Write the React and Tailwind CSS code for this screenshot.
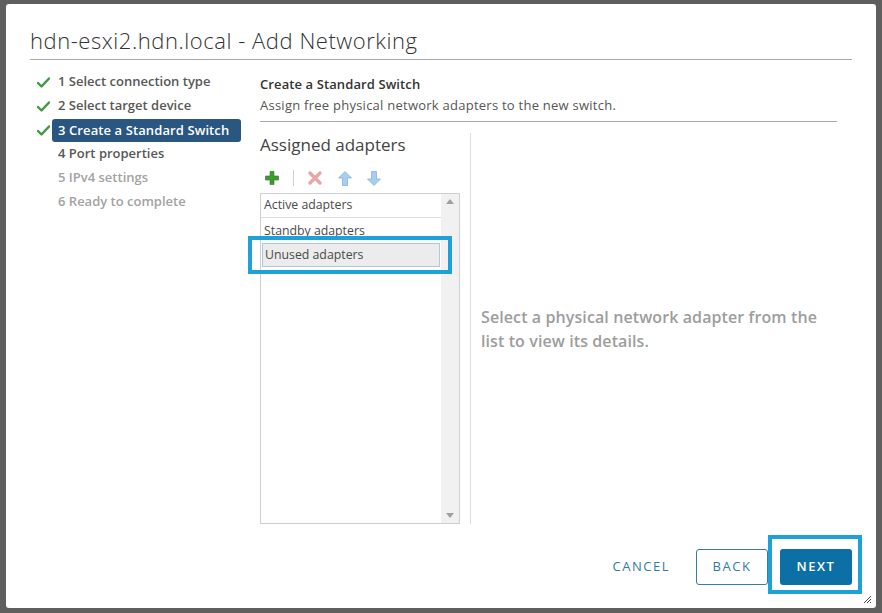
import React from 'react';

const steps = [
  { n: 1, label: 'Select connection type', done: true },
  { n: 2, label: 'Select target device', done: true },
  { n: 3, label: 'Create a Standard Switch', done: true, active: true },
  { n: 4, label: 'Port properties' },
  { n: 5, label: 'IPv4 settings', disabled: true },
  { n: 6, label: 'Ready to complete', disabled: true },
];

function Check() {
  return (
    <svg width="13" height="11" viewBox="0 0 13 11" className="shrink-0">
      <path d="M1 6 L4.5 9.5 L12 1.5" fill="none" stroke="#3c9a3c" strokeWidth="2.4" strokeLinecap="round" strokeLinejoin="round" />
    </svg>
  );
}

function PlusIcon() {
  return (
    <svg width="16" height="16" viewBox="0 0 16 16">
      <path d="M6 1.5h4v4.5h4.5v4H10v4.5H6V10H1.5V6H6z" fill="#3e9b2f" stroke="#2c7a22" strokeWidth="0.6" />
    </svg>
  );
}

function RemoveIcon() {
  return (
    <svg width="16" height="16" viewBox="0 0 16 16">
      <path d="M3 3 L13 13 M13 3 L3 13" stroke="#e7a7a7" strokeWidth="3.4" strokeLinecap="round" />
    </svg>
  );
}

function ArrowIcon({ down }) {
  return (
    <svg width="16" height="17" viewBox="0 0 16 17" style={down ? { transform: 'rotate(180deg)' } : undefined}>
      <path d="M8 1.5 L14.5 8 H10.5 V15.5 H5.5 V8 H1.5 Z" fill="#a9cdec" stroke="#86b4dc" strokeWidth="0.8" strokeLinejoin="round" />
    </svg>
  );
}

export default function App() {
  return (
    <div className="w-[882px] h-[613px] bg-[#5f5f5f] pt-[4px] pl-[6px] font-['Open_Sans',sans-serif]">
      <div className="relative w-[870px] h-[604px] bg-white rounded-[3px] flex flex-col">
        {/* header */}
        <div className="pl-[24px] pr-[24px] pt-[23px]">
          <h1 className="text-[22px] leading-[26px] text-[#333] font-light tracking-[0.55px]">
            hdn-esxi2.hdn.local - Add Networking
          </h1>
          <div className="mt-[6px] h-px bg-[#a8a8a8]" />
        </div>

        <div className="flex flex-1 min-h-0">
          {/* wizard steps */}
          <ul className="w-[254px] pl-[31px] pt-[10px] text-[13px] font-semibold">
            {steps.map((s) => (
              <li key={s.n} className="flex items-center h-[24px]">
                <span className="w-[15px] flex justify-start">{s.done && <Check />}</span>
                <span
                  className={
                    s.active
                      ? 'pl-[6px] pr-[12px] h-[23px] leading-[23px] rounded-[3px] bg-[#2a5682] text-white tracking-[0.1px]'
                      : s.disabled
                        ? 'pl-[6px] text-[#a3a3a3]'
                        : 'pl-[6px] text-[#575757]'
                  }
                >
                  {s.n} {s.label}
                </span>
              </li>
            ))}
          </ul>

          {/* step content */}
          <div className="flex-1 pr-[39px] pt-[16px] flex flex-col">
            <h2 className="text-[13px] leading-[16px] font-semibold text-[#333] tracking-[0.1px]">Create a Standard Switch</h2>
            <p className="mt-[5px] text-[13px] leading-[16px] text-[#565656] tracking-[0.25px]">
              Assign free physical network adapters to the new switch.
            </p>
            <div className="mt-[8px] h-px bg-[#a8a8a8]" />

            <div className="flex mt-[11px] h-[391px]">
              <div className="w-[211px] border-r border-[#dcdcdc] pr-[10px] flex flex-col">
                <h3 className="text-[17px] leading-[22px] text-[#444] font-normal mt-[1px]">Assigned adapters</h3>
                <div className="flex items-center h-[22px] mt-[11px] pl-[4px]">
                  <PlusIcon />
                  <span className="ml-[13px] mr-[13px] w-px h-[16px] bg-[#cfcfcf]" />
                  <RemoveIcon />
                  <span className="ml-[14px]"><ArrowIcon /></span>
                  <span className="ml-[13px]"><ArrowIcon down /></span>
                </div>
                <div className="mt-[4px] flex-1 border border-[#cfcfcf] flex">
                  <div className="flex-1 text-[12.3px] text-[#4a4a4a]">
                    <div className="h-[24px] leading-[22px] pl-[3px] border-b border-[#dcdcdc]">Active adapters</div>
                    <div className="h-[25px] leading-[25px] pl-[3px]">Standby adapters</div>
                    <div className="mx-[1px] h-[24px] leading-[22px] pl-[2px] bg-[#ececec] border border-[#a9cbe0]">
                      Unused adapters
                    </div>
                  </div>
                  <div className="w-[18px] bg-[#f1f1f1] flex flex-col justify-between items-center py-[5px]">
                    <span className="w-0 h-0 border-l-[4px] border-r-[4px] border-b-[5px] border-l-transparent border-r-transparent border-b-[#a0a0a0]" />
                    <span className="w-0 h-0 border-l-[4px] border-r-[4px] border-t-[5px] border-l-transparent border-r-transparent border-t-[#a0a0a0]" />
                  </div>
                </div>
              </div>
              <div className="flex-1 pl-[10px] pt-[172px]">
                <p className="text-[16px] leading-[24px] font-semibold text-[#9d9d9d] w-[350px] tracking-[0.1px]">
                  Select a physical network adapter from the list to view its details.
                </p>
              </div>
            </div>
          </div>
        </div>

        {/* footer buttons */}
        <div className="flex justify-end items-center gap-[12px] pr-[24px] pb-[23px] pt-[17px]">
          <button className="h-[36px] px-[14px] text-[13px] tracking-[1.5px] text-[#2f7aa6] font-normal">CANCEL</button>
          <button className="h-[36px] w-[72px] border border-[#3b7ba3] rounded-[3px] text-[13px] tracking-[1.5px] text-[#2f7aa6]">BACK</button>
          <button className="h-[36px] w-[72px] rounded-[3px] bg-[#0c6fa6] text-white text-[13px] font-semibold tracking-[1.5px]">NEXT</button>
        </div>

        {/* resize grip */}
        <svg className="absolute right-[4px] bottom-[4px]" width="9" height="9" viewBox="0 0 9 9">
          <path d="M8 1 L1 8 M8 4 L4 8 M8 7 L7 8" stroke="#444" strokeWidth="1" />
        </svg>

        {/* callout boxes */}
        <div className="absolute left-[242px] top-[232px] w-[204px] h-[38px] border-[4px] border-[#1ea0d9]" />
        <div className="absolute left-[762px] top-[531px] w-[94px] h-[59px] border-[4px] border-[#1ea0d9]" />
      </div>
    </div>
  );
}
